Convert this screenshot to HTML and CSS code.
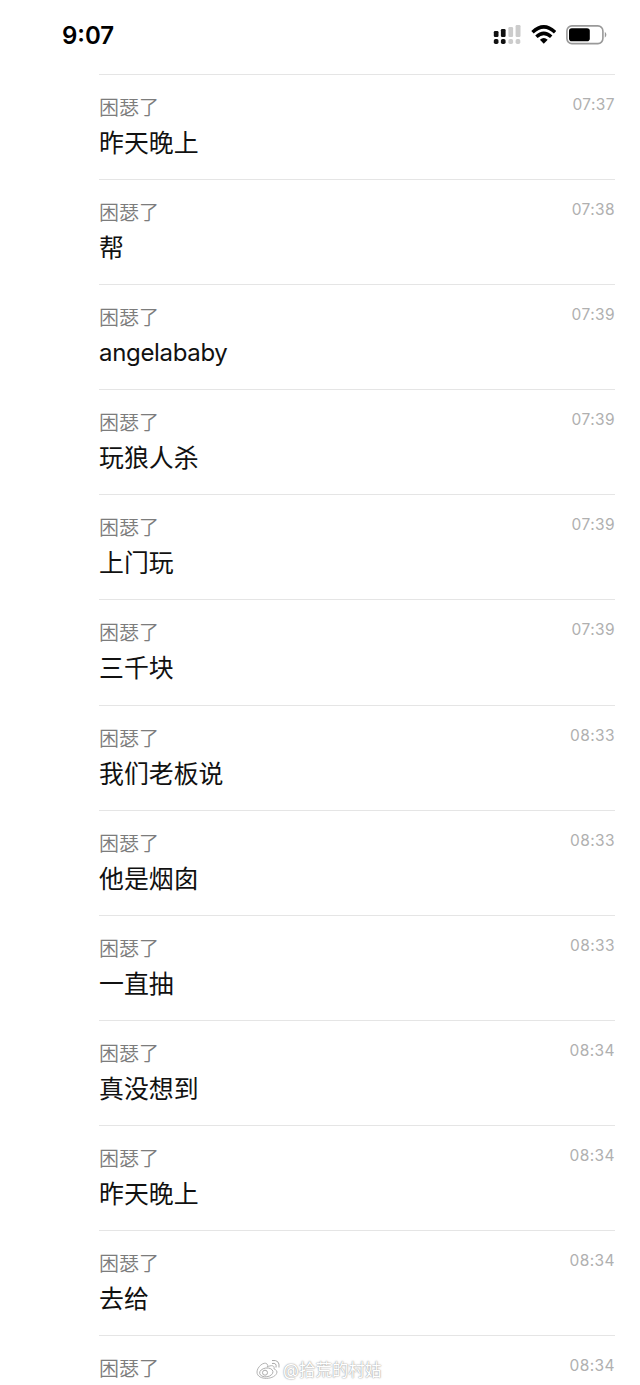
FILE: index.html
```
<!DOCTYPE html>
<html lang="zh-CN"><head><meta charset="utf-8"><title>聊天记录</title><link rel="stylesheet" href="styles.css"></head>
<body>
<header class="status"><div class="clock">9:07</div>
<div class="indicators">
<svg class="signal" width="28" height="20" viewBox="0 0 28 20"><g fill="#111"><rect x=".8" y="6" width="4.7" height="6" rx="1.2"/><rect x=".8" y="14" width="4.7" height="5" rx="1.7"/><rect x="7.9" y="4" width="4.7" height="8" rx="1.2"/><rect x="7.9" y="14" width="4.7" height="5" rx="1.7"/></g><g fill="#ccc"><rect x="15.4" y="2" width="4.7" height="10" rx="1.2"/><rect x="15.4" y="14" width="4.7" height="5" rx="1.7"/><rect x="22.6" y="0" width="4.9" height="12" rx="1.2"/><rect x="22.6" y="14" width="4.7" height="5" rx="1.7"/></g></svg>
<svg class="wifi" width="25" height="19" viewBox="0 0 25 19"><g fill="none" stroke="#000" stroke-width="3.5"><path d="M1.5 7.2Q12.8-3.4 24.1 7.2"/><path d="M5.4 11.7Q12.8 4.9 20.2 11.7"/></g><path d="M8.9 14.7Q12.8 11.2 16.7 14.7L12.8 18.7Z"/></svg>
<svg class="battery" width="41" height="20" viewBox="0 0 41 20"><rect x=".9" y=".9" width="36" height="17.7" rx="5" fill="none" stroke="#999" stroke-width="1.6"/><rect x="3" y="3.2" width="20.8" height="13" rx="2.8"/><path d="M38.8 6.7Q42 9.7 38.8 12.7Z" fill="#999"/></svg>
</div></header>
<main class="messages">
<article class="message"><div class="copy"><h2>困瑟了</h2><p>昨天晚上</p></div><time>07:37</time></article>
<article class="message"><div class="copy"><h2>困瑟了</h2><p>帮</p></div><time>07:38</time></article>
<article class="message"><div class="copy"><h2>困瑟了</h2><p class="latin">angelababy</p></div><time>07:39</time></article>
<article class="message"><div class="copy"><h2>困瑟了</h2><p>玩狼人杀</p></div><time>07:39</time></article>
<article class="message"><div class="copy"><h2>困瑟了</h2><p>上门玩</p></div><time>07:39</time></article>
<article class="message"><div class="copy"><h2>困瑟了</h2><p>三千块</p></div><time>07:39</time></article>
<article class="message"><div class="copy"><h2>困瑟了</h2><p>我们老板说</p></div><time>08:33</time></article>
<article class="message"><div class="copy"><h2>困瑟了</h2><p>他是烟囱</p></div><time>08:33</time></article>
<article class="message"><div class="copy"><h2>困瑟了</h2><p>一直抽</p></div><time>08:33</time></article>
<article class="message"><div class="copy"><h2>困瑟了</h2><p>真没想到</p></div><time>08:34</time></article>
<article class="message"><div class="copy"><h2>困瑟了</h2><p>昨天晚上</p></div><time>08:34</time></article>
<article class="message"><div class="copy"><h2>困瑟了</h2><p>去给</p></div><time>08:34</time></article>
<article class="message"><div class="copy"><h2>困瑟了</h2></div><time>08:34</time></article>
</main>
<div class="watermark"><svg width="25" height="22" viewBox="0 0 25 22"><path d="M11 5C8 2 1 8 1 13c0 9 19 8 20 0 0-2-3-3-3-3 1-4-3-4-7-2 1-1 1-2 0-3Z" fill="#fff" stroke="#aaa" stroke-width=".9"/><ellipse cx="10.3" cy="13.4" rx="6.7" ry="4.4" transform="rotate(-8 10.3 13.4)" fill="#fff" stroke="#aaa" stroke-width=".9"/><circle cx="9" cy="13.7" r="2.5" fill="#fff" stroke="#aaa"/><path d="M16 1.5q8-1 7 7M16 4.5q5-1 4 4" fill="none" stroke="#aaa"/></svg><span>@拾荒的村姑</span></div>
</body></html>
```
FILE: styles.css
```
* { box-sizing: border-box; }
body { margin: 0; height: 1385px; overflow: hidden; position: relative; background: #fff; font-family: Inter, "Noto Sans CJK SC", sans-serif; }
.status { height: 74px; padding: 22px 33px 0 62px; display: flex; justify-content: space-between; }
.clock { font-size: 24px; line-height: 28px; font-weight: 600; }
.indicators { display: flex; gap: 10px; padding-top: 3px; }
.messages { margin-left: 99px; width: 516px; }
.message { height: 105.1px; border-top: 1px solid #e5e5e5; display: flex; justify-content: space-between; padding-top: 18px; }
.message h2 { margin: 0; font-size: 20px; line-height: 30px; font-weight: 350; color: #7c7c7c; }
.message p { margin: 2px 0 0; font-size: 24.9px; line-height: 36px; color: #111; }
.message .latin { font-size: 24px; letter-spacing: -.33px; }
.message time { font-size: 15.5px; line-height: 20px; letter-spacing: .4px; color: #b0b0b0; font-weight: 400; padding-top: 2px; }
.watermark { position: absolute; left: 256px; top: 1358px; display: flex; align-items: center; gap: 2px; font-size: 16.5px; line-height: 24px; color: #fff; text-shadow: 0 0 1px #999, 0 0 2px #aaa; }
```
